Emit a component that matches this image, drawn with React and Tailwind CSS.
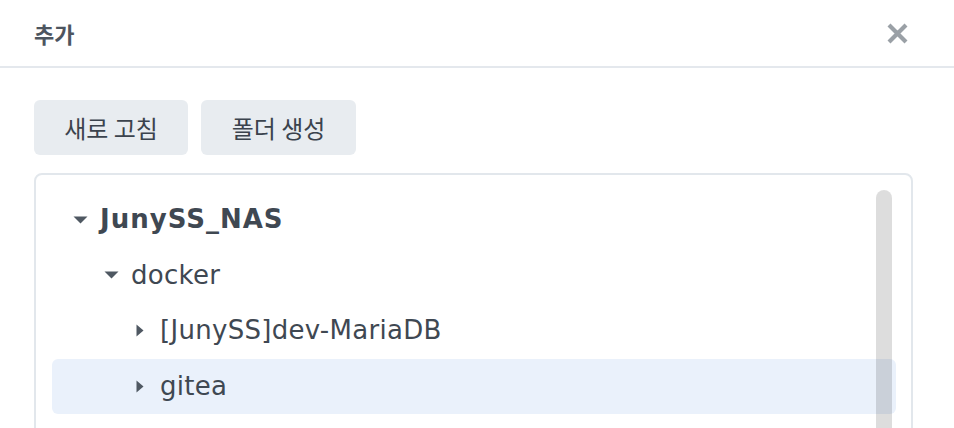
const TREE = [
  { label: 'JunySS_NAS', level: 0, open: true, bold: true },
  { label: 'docker', level: 1, open: true },
  { label: '[JunySS]dev-MariaDB', level: 2, open: false },
  { label: 'gitea', level: 2, open: false, selected: true },
];

function Caret({ open }) {
  if (open) {
    return (
      <svg width="15" height="8" viewBox="0 0 15 8" className="text-[#4f5862]">
        <path d="M0.5 0.5 L14.5 0.5 L7.5 7.5 Z" fill="currentColor" />
      </svg>
    );
  }
  return (
    <svg width="8" height="13" viewBox="0 0 8 13" className="text-[#4f5862]">
      <path d="M0.5 0.5 L7.5 6.5 L0.5 12.5 Z" fill="currentColor" />
    </svg>
  );
}

const PAD = ['pl-[18px]', 'pl-[49px]', 'pl-[78px]'];

export default function App() {
  return (
    <div className="w-[954px] h-[428px] overflow-hidden bg-white font-['Noto_Sans','Noto_Sans_CJK_KR',sans-serif]">
      {/* Header */}
      <div className="h-[66px] flex items-center justify-between pl-[34px] pr-[45px]">
        <span className="text-[22px] font-bold text-[#4d555f] font-['Noto_Sans_CJK_KR',sans-serif]">추가</span>
        <svg width="23" height="23" viewBox="0 0 23 23" className="text-[#9aa0a6]">
          <path d="M3 3 L20 20 M20 3 L3 20" stroke="currentColor" strokeWidth="4.2" strokeLinecap="butt" />
        </svg>
      </div>
      <div className="h-[2px] bg-[#e4e8ed]" />

      {/* Body */}
      <div className="px-[34px] pt-[32px]">
        <div className="flex gap-[13px]">
          <button className="w-[154px] h-[55px] rounded-[6px] bg-[#e8ecf0] text-[24px] text-[#3b434d] font-['Noto_Sans_CJK_KR',sans-serif]">
            새로 고침
          </button>
          <button className="w-[155px] h-[55px] rounded-[6px] bg-[#e8ecf0] text-[24px] text-[#3b434d] font-['Noto_Sans_CJK_KR',sans-serif]">
            폴더 생성
          </button>
        </div>

        <div className="relative mt-[18px] w-[879px] h-[320px] border-2 border-[#e2e7ec] rounded-[8px] pt-[17px] pl-[16px] pr-[15px]">
          <div className="flex flex-col">
            {TREE.map((n) => (
              <div
                key={n.label}
                className={`h-[55.5px] flex items-center rounded-[6px] ${PAD[n.level]} ${n.selected ? 'bg-[#eaf1fb]' : ''}`}
              >
                <span className="w-[20px] flex justify-center">
                  <Caret open={n.open} />
                </span>
                <span
                  className={`ml-[10px] text-[26px] text-[#3f4852] font-['DejaVu_Sans',sans-serif] ${n.bold ? 'font-bold tracking-[1px]' : 'tracking-[0.3px]'}`}
                >
                  {n.label}
                </span>
              </div>
            ))}
          </div>
          {/* scrollbar overlay */}
          <div className="absolute top-[15px] right-[19px] w-[16px] h-[400px] rounded-full bg-black/[0.135]" />
        </div>
      </div>
    </div>
  );
}
